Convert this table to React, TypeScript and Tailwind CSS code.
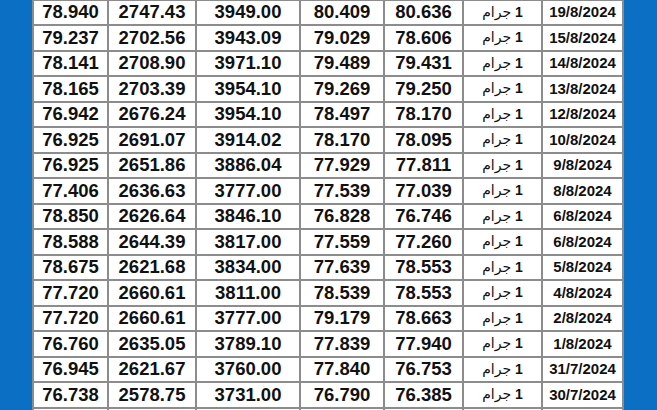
import React from "react";

const rows = [
  ["78.940", "2747.43", "3949.00", "80.409", "80.636", "19/8/2024"],
  ["79.237", "2702.56", "3943.09", "79.029", "78.606", "15/8/2024"],
  ["78.141", "2708.90", "3971.10", "79.489", "79.431", "14/8/2024"],
  ["78.165", "2703.39", "3954.10", "79.269", "79.250", "13/8/2024"],
  ["76.942", "2676.24", "3954.10", "78.497", "78.170", "12/8/2024"],
  ["76.925", "2691.07", "3914.02", "78.170", "78.095", "10/8/2024"],
  ["76.925", "2651.86", "3886.04", "77.929", "77.811", "9/8/2024"],
  ["77.406", "2636.63", "3777.00", "77.539", "77.039", "8/8/2024"],
  ["78.850", "2626.64", "3846.10", "76.828", "76.746", "6/8/2024"],
  ["78.588", "2644.39", "3817.00", "77.559", "77.260", "6/8/2024"],
  ["78.675", "2621.68", "3834.00", "77.639", "78.553", "5/8/2024"],
  ["77.720", "2660.61", "3811.00", "78.539", "78.553", "4/8/2024"],
  ["77.720", "2660.61", "3777.00", "79.179", "78.663", "2/8/2024"],
  ["76.760", "2635.05", "3789.10", "77.839", "77.940", "1/8/2024"],
  ["76.945", "2621.67", "3760.00", "77.840", "76.753", "31/7/2024"],
  ["76.738", "2578.75", "3731.00", "76.790", "76.385", "30/7/2024"],
];

const Cell = ({ children, cls = "" }: { children?: React.ReactNode; cls?: string }) => (
  <div className={`bg-white flex items-center justify-center text-[#111] font-bold ${cls}`}>
    {children}
  </div>
);

export default function App() {
  return (
    <div
      className="w-[657px] h-[410px] overflow-hidden bg-[#0b6fc3] flex"
      style={{ fontFamily: '"Liberation Sans", Arial, sans-serif' }}
    >
      <div className="w-[32px] shrink-0" />

      {/* TABLE */}
      <div className="grid grid-cols-[73px_86px_102px_82px_77px_77px_79px] auto-rows-[23.5px] gap-[2px] p-[2px] pt-[0.5px] bg-[#8c8c8c] h-max">
        {rows.map((r, i) => (
          <React.Fragment key={i}>
            <Cell cls="text-[18.5px]">{r[0]}</Cell>
            <Cell cls="text-[18.5px]">{r[1]}</Cell>
            <Cell cls="text-[18.5px]">{r[2]}</Cell>
            <Cell cls="text-[18.5px]">{r[3]}</Cell>
            <Cell cls="text-[18.5px]">{r[4]}</Cell>
            <Cell cls="text-[14px]">
              <span dir="rtl" style={{ fontFamily: '"Liberation Sans", "DejaVu Sans", sans-serif' }}>
                <span className="font-bold">1</span>{" "}
                <span className="font-normal">جرام</span>
              </span>
            </Cell>
            <Cell cls="text-[15px]">{r[5]}</Cell>
          </React.Fragment>
        ))}
        {/* next row, cut off */}
        {[0, 1, 2, 3, 4, 5, 6].map((k) => (
          <Cell key={k} />
        ))}
      </div>
    </div>
  );
}
